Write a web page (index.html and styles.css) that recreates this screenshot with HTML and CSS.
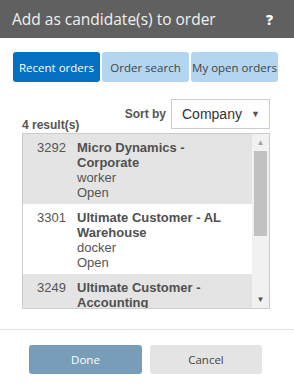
FILE: index.html
```html
<!DOCTYPE html>
<html lang="en">
<head>
    <meta charset="UTF-8">
    <meta name="viewport" content="width=device-width, initial-scale=1.0">
    <title>Add as candidate(s) to order</title>
    <link rel="stylesheet" href="styles.css">
</head>
<body>
    <div class="dialog">
        <div class="dialog-header">
            <span class="dialog-title">Add as candidate(s) to order</span>
            <span class="help">?</span>
        </div>
        <div class="tabs">
            <button class="tab active">Recent orders</button>
            <button class="tab">Order search</button>
            <button class="tab">My open orders</button>
        </div>
        <div class="toolbar">
            <span class="count">4 result(s)</span>
            <label class="sort-label">Sort by</label>
            <div class="select">
                <span>Company</span>
                <span class="caret">&#9660;</span>
            </div>
        </div>
        <div class="list-box">
            <div class="list">
                <div class="row shaded">
                    <span class="num">3292</span>
                    <div class="info">
                        <b>Micro Dynamics - Corporate</b>
                        <span>worker</span>
                        <span>Open</span>
                    </div>
                </div>
                <div class="row">
                    <span class="num">3301</span>
                    <div class="info">
                        <b>Ultimate Customer - AL Warehouse</b>
                        <span>docker</span>
                        <span>Open</span>
                    </div>
                </div>
                <div class="row shaded">
                    <span class="num">3249</span>
                    <div class="info">
                        <b>Ultimate Customer - Accounting</b>
                    </div>
                </div>
            </div>
            <div class="scrollbar">
                <span class="arrow">&#9650;</span>
                <div class="thumb"></div>
                <span class="arrow down">&#9660;</span>
            </div>
        </div>
        <div class="footer">
            <button class="btn done">Done</button>
            <button class="btn cancel">Cancel</button>
        </div>
    </div>
</body>
</html>
```

FILE: styles.css
```css
body {
    margin: 0;
    padding: 0;
    background-color: #fff;
    font-family: "Liberation Sans", Arial, sans-serif;
}
.dialog {
    width: 294px;
    height: 386px;
    background-color: #fff;
}
.dialog-header {
    height: 38px;
    background-color: #606060;
    display: flex;
    align-items: center;
    justify-content: space-between;
    padding: 0 21px 0 12px;
}
.dialog-title {
    font-family: "Open Sans", sans-serif;
    font-size: 15.5px;
    color: #f0f0f0;
}
.help {
    font-family: "Open Sans", sans-serif;
    font-weight: 800;
    font-size: 14px;
    color: #fff;
}
.tabs {
    display: flex;
    gap: 2px;
    margin: 14px 0 0 13px;
}
.tab {
    width: 87px;
    height: 30px;
    border: none;
    border-radius: 3px;
    background-color: #b3d5ef;
    color: #444;
    font-family: "Open Sans", sans-serif;
    font-size: 11.5px;
    padding: 0;
    white-space: nowrap;
}
.tab.active {
    background-color: #0570c1;
    color: #fff;
}
.toolbar {
    display: flex;
    align-items: flex-end;
    margin: 17px 24px 0 22px;
    height: 30px;
}
.count {
    font-size: 12px;
    font-weight: bold;
    color: #555;
    margin-bottom: -3px;
}
.sort-label {
    margin-left: auto;
    align-self: flex-start;
    margin-top: 8px;
    margin-right: 5px;
    font-size: 12px;
    font-weight: bold;
    color: #555;
}
.select {
    width: 99px;
    height: 30px;
    box-sizing: border-box;
    border: 1px solid #ccc;
    display: flex;
    align-items: center;
    justify-content: space-between;
    padding: 0 9px 0 10px;
    font-size: 14px;
    color: #333;
}
.caret {
    font-size: 9px;
    color: #555;
}
.list-box {
    display: flex;
    margin: 4px 24px 0 22px;
    height: 174px;
    border: 1px solid #ccc;
    overflow: hidden;
}
.list {
    flex: 1;
}
.row {
    display: flex;
    height: 70px;
    box-sizing: border-box;
    padding-top: 6px;
    font-size: 13px;
    line-height: 15px;
    color: #555;
}
.row.shaded {
    background-color: #e4e4e4;
}
.num {
    width: 43px;
    text-align: right;
    flex-shrink: 0;
}
.info {
    display: flex;
    flex-direction: column;
    margin-left: 11px;
    padding-right: 20px;
}
.info b {
    color: #505050;
}
.scrollbar {
    width: 17px;
    background-color: #f1f1f1;
    display: flex;
    flex-direction: column;
    align-items: center;
}
.arrow {
    font-size: 8px;
    color: #a3a3a3;
    height: 17px;
    line-height: 17px;
}
.arrow.down {
    margin-top: auto;
    color: #505050;
}
.thumb {
    width: 13px;
    height: 85px;
    background-color: #c1c1c1;
}
.footer {
    margin-top: 20px;
    border-top: 1px solid #e2e2e2;
    display: flex;
    gap: 8px;
    padding: 15px 0 0 29px;
}
.btn {
    width: 113px;
    height: 29px;
    border: none;
    border-radius: 3px;
    font-family: "Open Sans", sans-serif;
    font-size: 11.5px;
}
.done {
    background-color: #789db8;
    color: #fff;
}
.cancel {
    width: 112px;
    background-color: #e4e4e4;
    color: #444;
}
```
